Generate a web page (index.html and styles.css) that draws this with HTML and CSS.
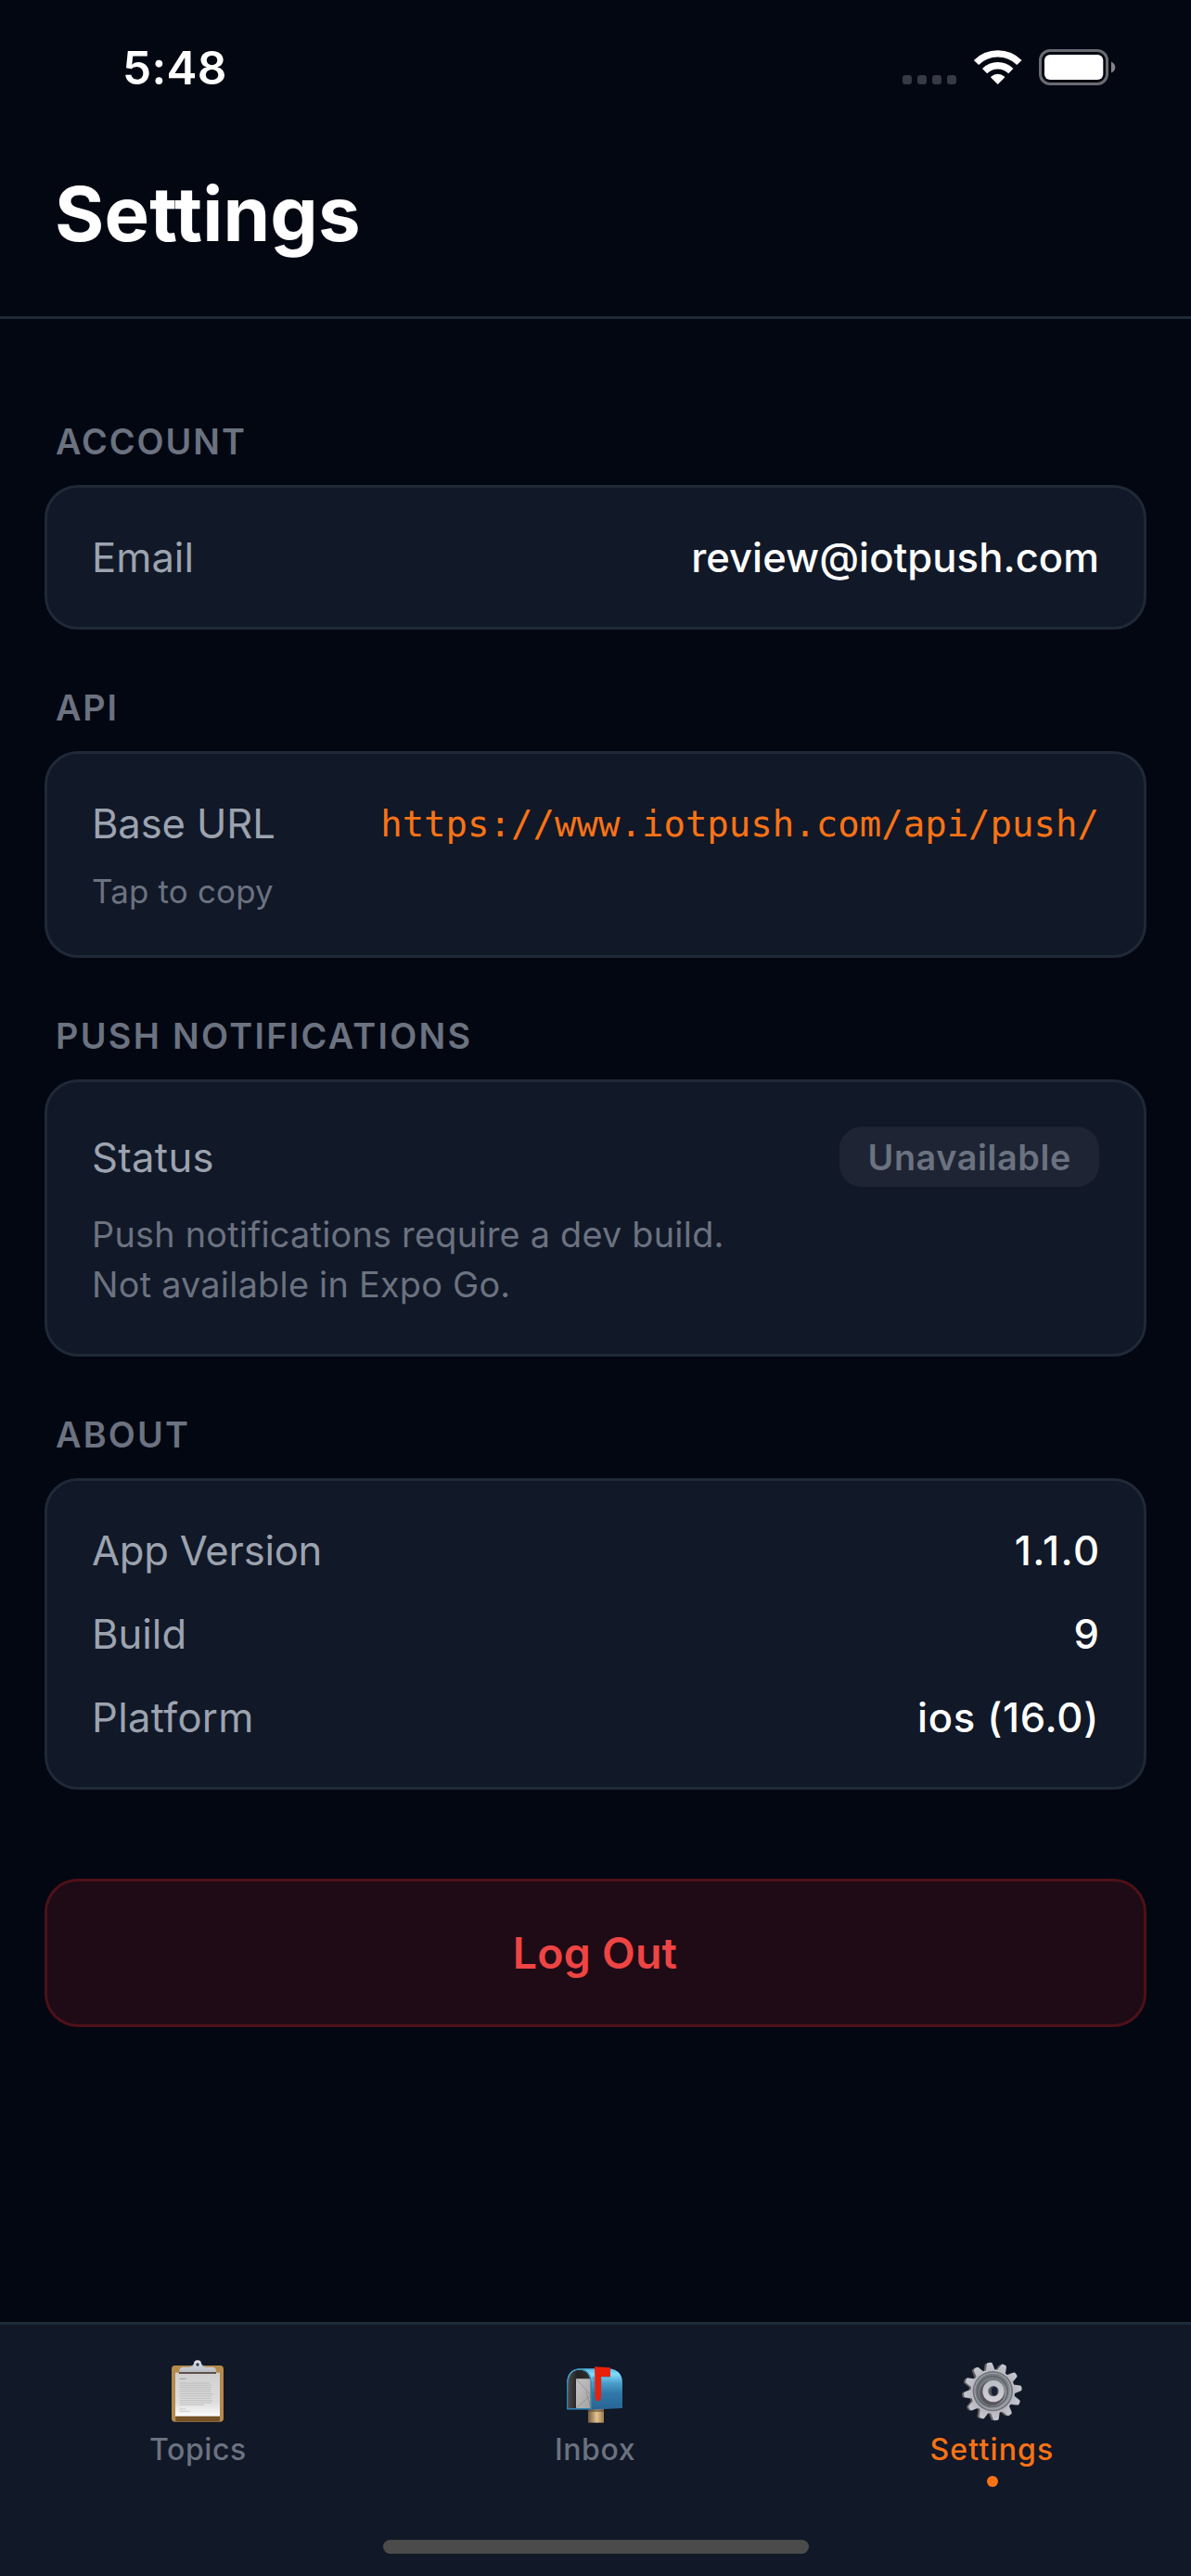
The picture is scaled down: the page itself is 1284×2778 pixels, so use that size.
FILE: index.html
```html
<!DOCTYPE html>
<html lang="en">
<head>
<meta charset="utf-8">
<title>Settings</title>
<link rel="stylesheet" href="styles.css">
</head>
<body>
<div class="screen">
  <div class="status-bar">
    <span class="time">5:48</span>
    <div class="status-icons">
      <svg class="signal" viewBox="0 0 58 10" width="58" height="10">
        <rect width="10" height="10" rx="3.2"/><rect x="16" width="10" height="10" rx="3.2"/><rect x="32" width="10" height="10" rx="3.2"/><rect x="48" width="10" height="10" rx="3.2"/>
      </svg>
      <svg class="wifi" viewBox="0 0 56 44" width="56" height="44">
        <g fill="none" stroke="#fff" stroke-width="7.4">
          <path d="M4.5 17.5A32.8 32.8 0 0 1 50.9 17.5"/>
          <path d="M13.6 26.6A19.9 19.9 0 0 1 41.8 26.6"/>
        </g>
        <path fill="#fff" d="M27.7 41 20.4 33.7Q19.8 33 20.6 32.4A11 11 0 0 1 34.8 32.4Q35.6 33 35 33.7Z"/>
      </svg>
      <svg class="battery" viewBox="0 0 83 39" width="83" height="39">
        <rect x="1.5" y="1.5" width="72" height="36" rx="10.5" fill="none" stroke="#696b71" stroke-width="3"/>
        <rect x="6" y="6" width="63.3" height="27" rx="6" fill="#fff"/>
        <path d="M78 13.5Q82.3 15.5 82.3 19.5T78 25.5Z" fill="#828388"/>
      </svg>
    </div>
  </div>

  <header class="header"><h1 class="title">Settings</h1></header>

  <main class="content">
    <section class="section">
      <h2 class="section-label ls-account">ACCOUNT</h2>
      <div class="card">
        <div class="row"><span class="label">Email</span><span class="value">review@iotpush.com</span></div>
      </div>
    </section>

    <section class="section">
      <h2 class="section-label ls-api">API</h2>
      <div class="card">
        <div class="row"><span class="label url-label">Base URL</span><span class="url">https://www.iotpush.com/api/push/</span></div>
        <p class="tap-hint">Tap to copy</p>
      </div>
    </section>

    <section class="section">
      <h2 class="section-label">PUSH NOTIFICATIONS</h2>
      <div class="card">
        <div class="row"><span class="label loose">Status</span><span class="pill">Unavailable</span></div>
        <p class="hint">Push notifications require a dev build.<br>Not available in Expo Go.</p>
      </div>
    </section>

    <section class="section">
      <h2 class="section-label ls-about">ABOUT</h2>
      <div class="card rows">
        <div class="row"><span class="label tight">App Version</span><span class="value version">1.1.0</span></div>
        <div class="row"><span class="label">Build</span><span class="value">9</span></div>
        <div class="row"><span class="label loose">Platform</span><span class="value platform">ios (16.0)</span></div>
      </div>
    </section>

    <button class="logout" type="button">Log Out</button>
  </main>

  <nav class="tabs">
    <div class="tab">
      <svg class="tab-icon" viewBox="174 159 216 216">
        <defs>
          <linearGradient id="paper" x1="0" y1="0" x2="0" y2="1"><stop offset="0" stop-color="#cfcfd0"/><stop offset=".7" stop-color="#dedede"/><stop offset="1" stop-color="#fafafa"/></linearGradient>
          <linearGradient id="clip" x1="0" y1="0" x2="0" y2="1"><stop offset="0" stop-color="#dfe2e6"/><stop offset="1" stop-color="#b9bdc4"/></linearGradient>
        </defs>
        <rect x="195" y="183" width="168" height="182" rx="11" fill="#b58a4b"/>
        <path d="M208 345H351V361Q351 364 347 364H212Q208 364 208 361Z" fill="#755127"/>
        <rect x="207" y="206" width="144" height="140" fill="url(#paper)"/>
        <path d="M207 345H351" stroke="#fff" stroke-width="3"/>
        <g stroke="#b2b2b4" stroke-width="2.2">
          <path d="M221 226H242" stroke="#858588"/>
          <path d="M221 240H318M221 247H325M221 254H322M221 261H324M221 268H322M221 275H330M221 282H324M221 289H323M221 296H328M221 303H324M221 310H300"/>
          <path d="M221 324H240M221 331H255" stroke="#bbb"/>
        </g>
        <path d="M219 203H339V210H219Z" fill="#5f5148"/>
        <path d="M251 188Q264 184 267 178Q279 160 291 178Q295 184 307 188Z" fill="#9eb9db"/>
        <path d="M220 204V198Q222 188 232 188H263Q267 186 267 178A12 12 0 0 1 291 178Q291 186 296 188H327Q337 189 339 198V204Z" fill="url(#clip)"/>
        <circle cx="279" cy="180" r="5" fill="#343b49"/>
      </svg>
      <span class="tab-label">Topics</span>
    </div>
    <div class="tab">
      <svg class="tab-icon" viewBox="138 159 216 216">
        <defs>
          <linearGradient id="box" x1="0" y1="0" x2="0" y2="1"><stop offset="0" stop-color="#52b5e8"/><stop offset=".13" stop-color="#83dcfb"/><stop offset=".35" stop-color="#4a9fcb"/><stop offset=".6" stop-color="#3078a8"/><stop offset="1" stop-color="#286493"/></linearGradient>
          <linearGradient id="post" x1="0" y1="0" x2="1" y2="0"><stop offset="0" stop-color="#72593a"/><stop offset=".55" stop-color="#e4c48f"/><stop offset="1" stop-color="#9c7c50"/></linearGradient>
          <linearGradient id="inside" x1="0" y1="0" x2="1" y2="0"><stop offset="0" stop-color="#4a4a4a"/><stop offset=".4" stop-color="#232323"/><stop offset="1" stop-color="#303030"/></linearGradient>
          <linearGradient id="letter" x1="0" y1="0" x2="1" y2="1"><stop offset="0" stop-color="#c4c4c4"/><stop offset="1" stop-color="#a4a4a4"/></linearGradient>
        </defs>
        <rect x="222" y="318" width="51" height="50" fill="url(#post)"/>
        <path d="M222 325H273V333H222Z" fill="#5d4930" opacity=".6"/>
        <path d="M194 193H290Q333 198 333 240V321L232 326H153V238Q156 196 194 193Z" fill="url(#box)"/>
        <path d="M157 321V238Q161 198 194 197Q228 198 230 238V321Z" fill="url(#inside)"/>
        <path d="M183 226H228L230 232V321H183Z" fill="url(#letter)"/>
        <path d="M184 227 231 279 184 320M215 266 231 321" fill="none" stroke="#858585" stroke-width="2"/>
        <path d="M155 323V238Q159 195 194 194Q230 196 232 238V323Z" fill="none" stroke="#3386b0" stroke-width="3"/>
        <path d="M236 220H242V287Q249 304 263 292L266 222H294V217H264V285Q262 300 250 298Z" fill="#1f5b85" opacity=".35"/>
        <path d="M243 187 294 190V219H264V284Q262 298 254 298Q246 298 245 284Z" fill="#e9200c"/>
      </svg>
      <span class="tab-label">Inbox</span>
    </div>
    <div class="tab active">
      <svg class="tab-icon" viewBox="192 159 216 216">
        <defs>
          <linearGradient id="metal" x1="0" y1="0" x2="0" y2="1"><stop offset="0" stop-color="#c3c8d0"/><stop offset="1" stop-color="#b9b5bf"/></linearGradient>
          <linearGradient id="dish" x1="0" y1="0" x2="1" y2="1"><stop offset="0" stop-color="#73787e"/><stop offset=".5" stop-color="#777c82"/><stop offset="1" stop-color="#a3a6ac"/></linearGradient>
          <linearGradient id="hub" x1="0" y1="0" x2="0" y2="1"><stop offset="0" stop-color="#b9bec5"/><stop offset="1" stop-color="#d3d0d7"/></linearGradient>
          <path id="tooth" d="M-16-64 -9-91Q-8-96-3-96H4Q9-96 10-91L17-64Z"/>
          <g id="cog">
            <circle r="73"/>
            <use href="#tooth" transform="rotate(-7)"/><use href="#tooth" transform="rotate(23)"/><use href="#tooth" transform="rotate(53)"/><use href="#tooth" transform="rotate(83)"/><use href="#tooth" transform="rotate(113)"/><use href="#tooth" transform="rotate(143)"/><use href="#tooth" transform="rotate(173)"/><use href="#tooth" transform="rotate(203)"/><use href="#tooth" transform="rotate(233)"/><use href="#tooth" transform="rotate(263)"/><use href="#tooth" transform="rotate(293)"/><use href="#tooth" transform="rotate(323)"/>
          </g>
        </defs>
        <use href="#cog" transform="translate(294 268) scale(.97)" fill="#62615f"/>
        <use href="#cog" transform="translate(301 267) scale(.98)" fill="url(#metal)"/>
        <circle cx="301" cy="266" r="65" fill="#70757b"/>
        <circle cx="301" cy="266" r="60" fill="#a2a6ac"/>
        <circle cx="301" cy="266" r="57" fill="url(#dish)"/>
        <circle cx="300" cy="267" r="49" fill="none" stroke="#5c6167" stroke-width="4"/>
        <circle cx="299" cy="272" r="40" fill="#57555a"/>
        <circle cx="303" cy="266" r="35" fill="url(#hub)"/>
        <circle cx="303" cy="266" r="17" fill="#555960"/>
        <ellipse cx="306" cy="266" rx="10" ry="14" fill="#182033"/>
      </svg>
      <span class="tab-label">Settings</span>
      <span class="dot"></span>
    </div>
  </nav>
  <div class="home-indicator"></div>
</div>
</body>
</html>
```
FILE: styles.css
```css
* { box-sizing: border-box; }

body {
  margin: 0;
  background: #030712;
  color: #fff;
  font-family: Inter, "Liberation Sans", sans-serif;
}

h1, h2, p { margin: 0; font-weight: inherit; }
svg { display: block; }

.screen {
  position: relative;
  display: flex;
  flex-direction: column;
  width: 1284px;
  height: 2778px;
  overflow: hidden;
}

/* Status bar */
.status-bar {
  display: flex;
  justify-content: space-between;
  height: 141px;
  padding: 0 81px 0 132px;
}
.time {
  margin-top: 43px;
  font-size: 49.5px;
  font-weight: 600;
  line-height: 60px;
  letter-spacing: 0.3px;
}
.status-icons {
  display: flex;
  align-items: flex-start;
}
.signal { margin-top: 81px; fill: #363a43; }
.wifi { margin: 50px 16px 0 17px; }
.battery { margin-top: 53px; }

/* Header */
.header {
  height: 203px;
  padding: 39px 60px 0 59px;
  border-bottom: 3px solid #1f2937;
}
.title {
  font-size: 81.5px;
  font-weight: 700;
  line-height: 102px;
  letter-spacing: 0.13px;
}

/* Sections */
.content {
  flex: 1;
  display: flex;
  flex-direction: column;
  gap: 60px;
  padding: 108px 48px 0;
}
.section-label {
  height: 71px;
  padding-left: 12px;
  color: #6b7280;
  font-size: 37.8px;
  font-weight: 600;
  line-height: 48px;
  letter-spacing: 2.3px;
}
.ls-account { letter-spacing: 1.95px; }
.ls-api { letter-spacing: 1.8px; }
.ls-about { letter-spacing: 2.2px; }

.card {
  padding: 48px;
  border: 3px solid #1f2937;
  border-radius: 36px;
  background: #111827;
}
.rows { display: flex; flex-direction: column; gap: 36px; }
.row {
  display: flex;
  align-items: center;
  justify-content: space-between;
  font-size: 43.6px;
  line-height: 54px;
}
.label, .value {
  padding-top: 2px;
  line-height: 52px;
}
.label { color: #9ca3af; }
.loose { letter-spacing: 0.3px; }
.tight { letter-spacing: -0.25px; }
.url-label { letter-spacing: -0.15px; }
.value { font-weight: 500; letter-spacing: 0.04px; }
.version { margin-right: -1.6px; letter-spacing: 1.4px; }
.platform { letter-spacing: 0.71px; }
.url {
  color: #f97316;
  font-family: "DejaVu Sans Mono", monospace;
  font-size: 39px;
  line-height: 47px;
}
.tap-hint {
  margin: 25px 0 -1px;
  color: #6b7280;
  font-size: 34.9px;
  line-height: 43px;
  letter-spacing: 0.2px;
}
.hint {
  margin-top: 24px;
  color: #6b7280;
  font-size: 37.8px;
  line-height: 54px;
  letter-spacing: 0.25px;
}
.pill {
  padding: 10px 30px 8px;
  border-radius: 24px;
  background: #1e2433;
  color: #6b7280;
  font-size: 37.8px;
  font-weight: 600;
  line-height: 47px;
  letter-spacing: 0.6px;
}

.logout {
  margin: 36px 0 0;
  padding: 48px 49px 48px 48px;
  border: 3px solid #4d1118;
  border-radius: 36px;
  background: #1f0b15;
  color: #ef4444;
  font-family: inherit;
  font-size: 46.5px;
  font-weight: 600;
  line-height: 58px;
  letter-spacing: 0.2px;
}

/* Tab bar */
.tabs {
  display: flex;
  height: 274px;
  padding-top: 36px;
  border-top: 3px solid #1f2937;
  background: #111827;
}
.tab {
  flex: 1;
  display: flex;
  flex-direction: column;
  align-items: center;
  color: #6b7280;
}
.tab-icon { width: 72px; height: 72px; }
.tab-label {
  margin: 7px 1px 0 0;
  font-size: 32px;
  font-weight: 500;
  line-height: 40px;
  letter-spacing: 0.6px;
}
.active { color: #f97316; }
.active .tab-label { letter-spacing: 1.16px; }
.dot {
  width: 12px;
  height: 12px;
  margin-top: 8px;
  border-radius: 50%;
  background: #f97316;
}
.home-indicator {
  position: absolute;
  left: 413px;
  bottom: 24px;
  width: 459px;
  height: 15px;
  border-radius: 8px;
  background: #4b4b4b;
}
```
